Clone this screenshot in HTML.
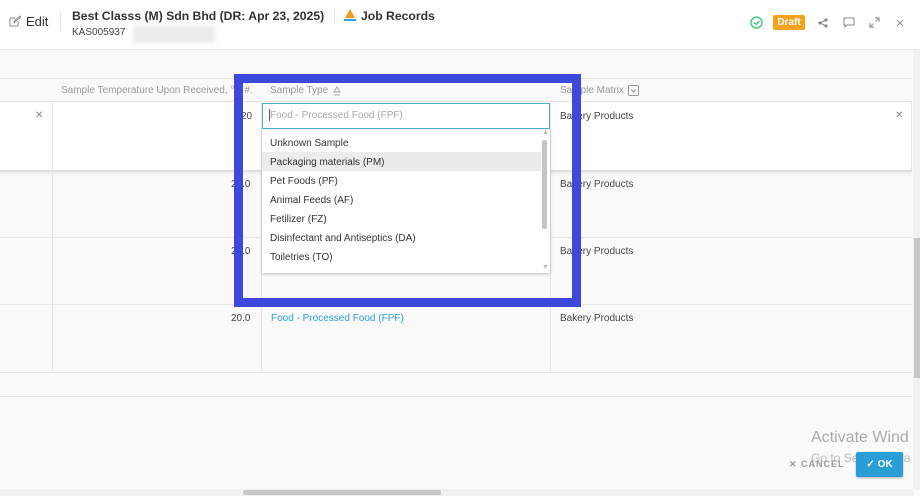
<!DOCTYPE html>
<html><head><style>
*{margin:0;padding:0;box-sizing:border-box}
body{width:920px;height:496px;overflow:hidden;background:#fafafa;font-family:"Liberation Sans",sans-serif;position:relative;color:#333}
.a{position:absolute}
.hl{position:absolute;left:0;right:8px;height:1px;background:#e6e6e6}
.vl{position:absolute;width:1px;background:#e6e6e6}
.t{position:absolute;font-size:10px;color:#444;white-space:nowrap}
.opt{position:absolute;left:270px;font-size:10px;color:#333;white-space:nowrap}
</style></head><body>
<div class="a" style="left:0;top:0;width:920px;height:49px;background:#fff"></div>
<svg class="a" style="left:9px;top:15px" width="12" height="12" viewBox="0 0 12 12"><path d="M1 3h5M1 3v8h8V6M5 8l1-3 5-4 1 1-5 4z" fill="none" stroke="#888" stroke-width="1"/></svg>
<div class="t" style="left:26px;top:14px;font-size:13px;color:#333">Edit</div>
<div class="a" style="left:60px;top:12px;width:1px;height:18px;background:#e4e4e4"></div>
<div class="t" style="left:72px;top:9px;font-size:12.2px;color:#333;font-weight:bold">Best Classs (M) Sdn Bhd (DR: Apr 23, 2025)</div>
<div class="a" style="left:334px;top:10px;width:1px;height:14px;background:#e4e4e4"></div>
<svg class="a" style="left:343px;top:8px" width="14" height="14" viewBox="0 0 14 14"><path d="M7 1L2 10h10z" fill="#f29a1c"/><rect x="1" y="11" width="12" height="2" fill="#3a9ad9"/></svg>
<div class="t" style="left:361px;top:9px;font-size:12.2px;font-weight:bold;color:#333">Job Records</div>
<div class="t" style="left:72px;top:27px;font-size:10px">KAS005937</div>
<div class="a" style="left:133px;top:26px;width:82px;height:17px;background:#ececec;filter:blur(2px)"></div>
<svg class="a" style="left:750px;top:16px" width="13" height="13" viewBox="0 0 13 13"><circle cx="6.5" cy="6.5" r="5.5" fill="none" stroke="#2ecc71" stroke-width="1.3"/><path d="M4 6.5l2 2 3-3.5" fill="none" stroke="#2ecc71" stroke-width="1.3"/></svg>
<div class="a" style="left:773px;top:15px;width:32px;height:15px;background:#f7a21b;border-radius:2px;color:#fff;font-size:10px;font-weight:bold;text-align:center;line-height:15px">Draft</div>
<svg class="a" style="left:818px;top:18px" width="10" height="10" viewBox="0 0 10 10"><circle cx="8" cy="2" r="1.6" fill="#888"/><circle cx="2" cy="5" r="1.6" fill="#888"/><circle cx="8" cy="8" r="1.6" fill="#888"/><path d="M8 2L2 5l6 3" stroke="#888" fill="none"/></svg>
<svg class="a" style="left:843px;top:17px" width="12" height="11" viewBox="0 0 12 11"><path d="M1 1h10v7H4l-2 2V8H1z" fill="none" stroke="#888"/></svg>
<svg class="a" style="left:869px;top:17px" width="11" height="11" viewBox="0 0 11 11"><path d="M6 1h4v4M10 1L6.5 4.5M5 10H1V6M1 10l3.5-3.5" fill="none" stroke="#999" stroke-width="1.2"/></svg>
<svg class="a" style="left:896px;top:19px" width="8" height="8" viewBox="0 0 8 8"><path d="M1 1l6 6M7 1L1 7" stroke="#999" stroke-width="1.2"/></svg>
<div class="hl" style="top:49px;right:0;background:#e8e8e8"></div>
<div class="hl" style="top:78px"></div>
<div class="t" style="left:61px;top:85px;color:#999;font-size:10px">Sample Temperature Upon Received, °C #.</div>
<div class="t" style="left:270px;top:85px;color:#999">Sample Type</div>
<svg class="a" style="left:332px;top:86px" width="10" height="10" viewBox="0 0 10 10"><path d="M5 1l3 5H2zM2 9h6" fill="none" stroke="#aaa"/></svg>
<div class="t" style="left:560px;top:85px;color:#999">Sample Matrix</div>
<svg class="a" style="left:628px;top:85px" width="11" height="11" viewBox="0 0 11 11"><rect x="0.5" y="0.5" width="10" height="10" rx="1" fill="none" stroke="#999"/><path d="M3 4.5l2.5 2.5 2.5-2.5" fill="none" stroke="#999"/></svg>
<div class="hl" style="top:101px"></div>
<div class="a" style="left:0;top:102px;width:912px;height:68px;background:#fff"></div>
<div class="hl" style="top:170px;height:2px;background:#e0e0e0;box-shadow:0 1px 3px #ddd"></div>
<div class="hl" style="top:237px"></div>
<div class="hl" style="top:304px"></div>
<div class="hl" style="top:372px"></div>
<div class="hl" style="top:396px"></div>
<div class="vl" style="left:52px;top:102px;height:270px"></div>
<div class="vl" style="left:261px;top:102px;height:270px"></div>
<div class="vl" style="left:550px;top:102px;height:270px"></div>
<div class="vl" style="left:911px;top:102px;height:68px"></div>
<div class="t" style="left:35px;top:110px;color:#888">✕</div>
<div class="t" style="left:895px;top:110px;color:#888">✕</div>
<div class="t" style="left:241px;top:111px">20</div>
<div class="t" style="left:231px;top:179px">21.0</div>
<div class="t" style="left:231px;top:246px">21.0</div>
<div class="t" style="left:231px;top:313px">20.0</div>
<div class="t" style="left:560px;top:111px">Bakery Products</div>
<div class="t" style="left:560px;top:179px">Bakery Products</div>
<div class="t" style="left:560px;top:246px">Bakery Products</div>
<div class="t" style="left:560px;top:313px">Bakery Products</div>
<div class="t" style="left:271px;top:313px;color:#2a9fd6">Food - Processed Food (FPF)</div>
<div class="a" style="left:262px;top:103px;width:288px;height:26px;border:1px solid #4ab0d0;background:#fff"></div>
<div class="t" style="left:270px;top:110px;color:#aaa">Food - Processed Food (FPF)</div>
<div class="a" style="left:269px;top:109px;width:1px;height:12px;background:#555"></div>
<div class="a" style="left:262px;top:130px;width:288px;height:143px;background:#fff;box-shadow:0 1px 3px rgba(0,0,0,.25);overflow:hidden"></div>
<div class="a" style="left:262px;top:152px;width:279px;height:19px;background:#ececec"></div>
<div class="opt" style="top:138px">Unknown Sample</div>
<div class="opt" style="top:157px">Packaging materials (PM)</div>
<div class="opt" style="top:176px">Pet Foods (PF)</div>
<div class="opt" style="top:195px">Animal Feeds (AF)</div>
<div class="opt" style="top:214px">Fetilizer (FZ)</div>
<div class="opt" style="top:233px">Disinfectant and Antiseptics (DA)</div>
<div class="opt" style="top:252px">Toiletries (TO)</div>
<div class="a" style="left:542px;top:140px;width:5px;height:89px;background:#c4c4c4;border-radius:2px"></div>
<div class="t" style="left:542px;top:129px;color:#bbb;font-size:7px">▲</div>
<div class="t" style="left:542px;top:264px;color:#bbb;font-size:7px">▼</div>
<div class="a" style="left:234px;top:74px;width:347px;height:233px;border:9px solid #3f48dd"></div>
<div class="a" style="left:913px;top:50px;width:7px;height:440px;background:#f1f1f1"></div>
<div class="a" style="left:914px;top:238px;width:6px;height:140px;background:#c8c8c8"></div>
<div class="a" style="left:0;top:489px;width:913px;height:7px;background:#f1f1f1"></div>
<div class="a" style="left:243px;top:490px;width:198px;height:5px;background:#c8c8c8;border-radius:2px"></div>
<div class="t" style="left:811px;top:429px;font-size:16px;color:#aaa">Activate Wind</div>
<div class="t" style="left:811px;top:451px;font-size:12px;color:#bbb">Go to Settings to a</div>
<div class="t" style="left:789px;top:459px;font-size:9px;font-weight:bold;color:#999;letter-spacing:1px">✕ CANCEL</div>
<div class="a" style="left:856px;top:452px;width:47px;height:25px;background:#2a9fd6;border-radius:2px;color:#fff;font-size:10px;font-weight:bold;line-height:25px;text-align:center;box-shadow:0 1px 2px rgba(0,0,0,.3)">✓ OK</div>
</body></html>
